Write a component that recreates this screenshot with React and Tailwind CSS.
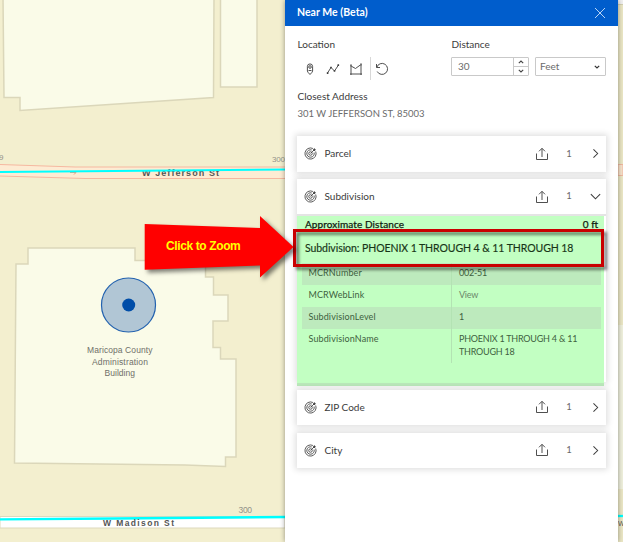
import React from 'react';

function Label({ x, y, size, w, children, fill = '#6f6f68', bold }) {
  return (
    <text x={x} y={y} fontSize={size} textLength={w} fill={fill} fontWeight={bold ? 700 : 400}>
      {children}
    </text>
  );
}

function MapCanvas() {
  return (
    <svg className="absolute inset-0 font-['Liberation_Sans',sans-serif]" width="623" height="542" viewBox="0 0 623 542">
      <rect width="623" height="542" fill="#f3efcf" />
      <g fill="#fafbe8" stroke="#dbd7ba" strokeWidth="1.5">
        <path d="M3-3 4 97.5H20V110.5L213.5 97.5 214-3Z" />
        <path d="M220.5-3V87H257V-3Z" />
        <path d="M28 248H135V260.5H205.5V277H213.5V295H228V321H213V347.5H220.5V359H236V457H225.5V466.5L185 465 14.5 463 16 264H28Z" />
      </g>
      <path d="M0 164.5 75 167H285V178.5H85L0 176Z" fill="#fdecd3" />
      <path d="M0 164.5 75 167H285M0 176 85 178.5H285" fill="none" stroke="#f5b8a0" />
      <path d="M70 172.5h6l-2 2" fill="none" stroke="#ee987a" />
      <Label x="142" y="176" size="9" w="77" fill="#555" bold>W Jefferson St</Label>
      <path d="M0 172 285 169.5" stroke="#00ffff" strokeWidth="2" />
      <Label x="-1" y="160" size="8" fill="#93938a">9</Label>
      <Label x="272" y="162" size="8" w="13" fill="#93938a">300</Label>
      <path d="M0 516.5H285V528H0Z" fill="#fff" stroke="#ddd9bd" />
      <path d="M0 519.3 115 518.5 285 517" stroke="#00ffff" strokeWidth="2.3" />
      <Label x="103" y="525.5" size="8.5" w="71" fill="#555" bold>W Madison St</Label>
      <Label x="238.5" y="512.5" size="8.5" w="13.5" fill="#93938a">300</Label>
      <Label x="87" y="353" size="8.5" w="65.500">Maricopa County</Label>
      <Label x="92" y="364.500" size="8.5" w="56">Administration</Label>
      <Label x="104.500" y="375.500" size="8.5" w="30.500">Building</Label>
      <circle cx="128.500" cy="305" r="27" fill="#b1c6d5" stroke="#2362af" strokeWidth="1.2" />
      <circle cx="128.700" cy="305" r="6.500" fill="#004da8" />
      <rect x="618" width="5" height="4" fill="#f0f0f0" />
      <path d="M618 4.500H623M618 325H623M618 489H623" stroke="#d3cfb1" />
      <rect x="618" y="5" width="5" height="320" fill="#ebe7c5" />
      <rect x="618" y="325" width="5" height="164" fill="#eff0dc" />
      <rect x="618" y="489" width="5" height="53" fill="#ebe7c5" />
      <path d="M618 164.500H623V175.500H618Z" fill="#f7e4cb" stroke="#f0b79f" />
      <path d="M618 516H623" stroke="#00ffff" strokeWidth="2.300" />
      <Label x="618" y="525.500" size="7" fill="#555">W</Label>
    </svg>
  );
}

function Icon({ className = '', size = 14, children }) {
  return (
    <svg className={`block shrink-0 ${className}`} width={size} height={size} viewBox="0 0 14 14" fill="none" stroke="#3c3c3c" strokeWidth="0.9">
      {children}
    </svg>
  );
}

function LayerHeader({ name, open }) {
  return (
    <div className={`flex items-center pl-[6.5px] pr-1 ${open ? 'h-[35px]' : 'h-[35.5px]'}`}>
      <Icon size={13}>
        <path d="M12.600 4.800A6 6 0 1 1 9.600 1.600M10.900 6A4 4 0 1 1 8.300 3.200" />
        <circle cx="7" cy="7" r="1.900" />
        <path d="M7 7 10.600 3.400" />
        <path d="M9.800 4.200V2.600L11.400 1 11.700 2.300 13 2.600 11.400 4.200Z" fill="#3c3c3c" stroke="none" />
      </Icon>
      <span className="ml-[8px] grow text-[10px]">{name}</span>
      <Icon size={14}>
        <path d="M1.500 6.500V12.500H12.500V6.500M7 10V1.500M4 4.300 7 1.300 10 4.300" />
      </Icon>
      <span className="w-10 text-center text-[9.500px] text-[#6b6b6b]">1</span>
      <Icon size={13}>
        <path d={open ? 'M2 4.500 7 9.500 12 4.500' : 'M4.800 2.500 9.300 7 4.800 11.500'} strokeWidth="1.100" />
      </Icon>
    </div>
  );
}

function Row({ name, value, shaded, height, muted }) {
  return (
    <div className={`flex ${height} ${shaded ? 'bg-[#bdeabd]' : ''}`}>
      <div className="w-[150px] border-r border-[#b3e3b3] pl-[6.500px] pt-[3px] tracking-[0.120px]">{name}</div>
      <div className={`whitespace-pre-line pl-[7px] pt-[3px] tracking-[-0.220px] ${muted ? 'text-[#6b886b]' : ''}`}>{value}</div>
    </div>
  );
}

const cardShadow = 'bg-white shadow-[0_0_6px_2px_rgba(0,0,0,0.12)]';

export default function App() {
  return (
    <div className="relative h-[542px] w-[623px] overflow-hidden">
      <MapCanvas />
      <main className="relative ml-[285px] h-[542px] w-[333px] bg-white font-[Lato,sans-serif] text-[#3b3b3b] shadow-[0_0_5px_rgba(0,0,0,0.4)]">
        <header className="flex h-[26px] items-center justify-between bg-[#005dcc] pl-3 pr-[12px] text-white">
          <h1 className="-mt-px text-[10.500px] font-bold tracking-[0.030px]">Near Me (Beta)</h1>
          <svg width="12" height="12" viewBox="0 0 12 12" stroke="#b8d4f5"><path d="M1 1 11 11M11 1 1 11" /></svg>
        </header>
        <section className="flex px-3 pt-[12px]">
          <div className="w-[154px] pl-[0.500px]">
            <div className="h-[14px] text-[10px] leading-[13px]">Location</div>
            <div className="mt-[5px] flex h-[23px] items-center">
              <Icon size={14} className="ml-[5px]">
                <path d="M4.400 4.500A2.600 2.600 0 0 1 9.600 4.500V9Q9.600 10 7 12.500Q4.400 10 4.400 9ZM5.500 8.500H8.500" />
                <circle cx="7" cy="5" r="1.300" />
              </Icon>
              <Icon size={14} className="ml-[9px]">
                <path d="M1.500 11 5 5.500 8.500 9 12.500 3" />
                <path d="M.8 10.300h1.600v1.600H.8ZM4.200 4.700h1.600v1.600H4.200ZM7.700 8.200h1.600v1.600H7.700ZM11.500 2.300h1.600v1.600h-1.600Z" fill="#3c3c3c" stroke="none" />
              </Icon>
              <Icon size={14} className="ml-[9px]">
                <path d="M2 4V12H12V2.500L6.500 6.500 2 4Z" />
                <path d="M1 2.500h2v2H1ZM11 1.500h2v2h-2ZM1 11h2v2H1ZM11 11h2v2h-2Z" fill="#777" stroke="none" />
              </Icon>
              <div className="ml-[7px] h-[23px] w-px bg-[#d8d8d8]" />
              <Icon size={14} className="ml-[4.500px]">
                <path d="M1.500 2V5.500H5M1.800 5.300A5.500 5.500 0 1 1 2.200 9.500" />
              </Icon>
            </div>
          </div>
          <div>
            <div className="h-[14px] pl-[0.500px] text-[10px] leading-[13px]">Distance</div>
            <div className="mt-[5px] flex gap-[6px] text-[10px] text-[#6b6b6b]">
              <div className="flex h-[19px] w-[78px] rounded-[1px] border border-[#c9c9c9]">
                <span className="grow pl-[6px] leading-[17px]">30</span>
                <div className="flex w-[15px] flex-col border-l border-[#c9c9c9]">
                  <div className="flex h-[9px] items-center justify-center border-b border-[#c9c9c9]">
                    <svg width="6" height="4" viewBox="0 0 6 4" fill="none" stroke="#444" strokeWidth="1.100"><path d="M.8 3.200 3 1 5.200 3.200" /></svg>
                  </div>
                  <div className="flex h-[8px] items-center justify-center">
                    <svg width="6" height="4" viewBox="0 0 6 4" fill="none" stroke="#444" strokeWidth="1.100"><path d="M.8 .8 3 3 5.200 .8" /></svg>
                  </div>
                </div>
              </div>
              <div className="flex h-[19px] w-[71px] items-center justify-between rounded-[1px] border border-[#c9c9c9] pl-1 pr-[5px]">
                <span className="leading-[17px]">Feet</span>
                <svg width="6" height="4" viewBox="0 0 6 4" fill="none" stroke="#333" strokeWidth="1.200"><path d="M.8 .8 3 3 5.200 .8" /></svg>
              </div>
            </div>
          </div>
        </section>
        <section className="px-3 pt-[9px]">
          <div className="pl-[0.500px] text-[10px] leading-[15px] tracking-[0.020px]">Closest Address</div>
          <div className="pl-[0.500px] pt-[2px] text-[9.500px] leading-[15px] text-[#6b6b6b]">301 W JEFFERSON ST, 85003</div>
        </section>
        <div className="mx-3 mt-[15px] flex flex-col gap-[7.500px]">
          <div className={cardShadow}><LayerHeader name="Parcel" /></div>
          <div className={`h-[203px] ${cardShadow}`}>
            <LayerHeader name="Subdivision" open />
            <div className="h-[2px] bg-[#e4e4e4]" />
            <div className="h-[170px] w-[307px] border-b-[3px] border-[#bbe9bb] bg-[#c2ffc2] text-[#223d22]">
              <div className="flex h-[15px] justify-between pl-[8px] pr-[6px] text-[10px] leading-[17px] text-[#102010] [-webkit-text-stroke:0.250px]">
                <span className="tracking-[0.100px]">Approximate Distance</span>
                <span>0 ft</span>
              </div>
              <div className="flex h-[32px] items-center pl-[8px] pt-[3px] text-[10.500px] tracking-[-0.070px] text-[#173517] [-webkit-text-stroke:0.150px]">Subdivision: PHOENIX 1 THROUGH 4 &amp; 11 THROUGH 18</div>
              <div className="ml-[5px] w-[299px] text-[9px] leading-[13px] text-[#405f40]">
                <Row name="MCRNumber" value="002-51" shaded height="h-[21.500px]" />
                <Row name="MCRWebLink" value="View" height="h-[22px]" muted />
                <Row name="SubdivisionLevel" value="1" shaded height="h-[22px]" />
                <Row name="SubdivisionName" value={'PHOENIX 1 THROUGH 4 & 11\nTHROUGH 18'} height="h-[34px]" />
              </div>
            </div>
          </div>
          <div className={cardShadow}><LayerHeader name="ZIP Code" /></div>
          <div className={cardShadow}><LayerHeader name="City" /></div>
        </div>
      </main>
      <div className="absolute left-[293px] top-[229px] h-[38px] w-[310.500px] border-[3px] border-[#c90000] drop-shadow-[3px_3px_1.500px_rgba(0,0,0,0.5)]" />
      <svg className="absolute left-[140px] top-[210px] overflow-visible drop-shadow-[3px_3px_2px_rgba(0,0,0,0.5)]" width="156" height="75" viewBox="140 210 156 75">
        <path d="M144.700 224 260 228V216L293.500 247 260 277.500V265.500L144.700 269.700Z" fill="#f00" />
      </svg>
      <div className="absolute left-[166px] top-[238px] font-['Liberation_Sans',sans-serif] text-[12px] font-bold leading-4 tracking-[-0.380px] text-[#ffff00]">Click to Zoom</div>
    </div>
  );
}
